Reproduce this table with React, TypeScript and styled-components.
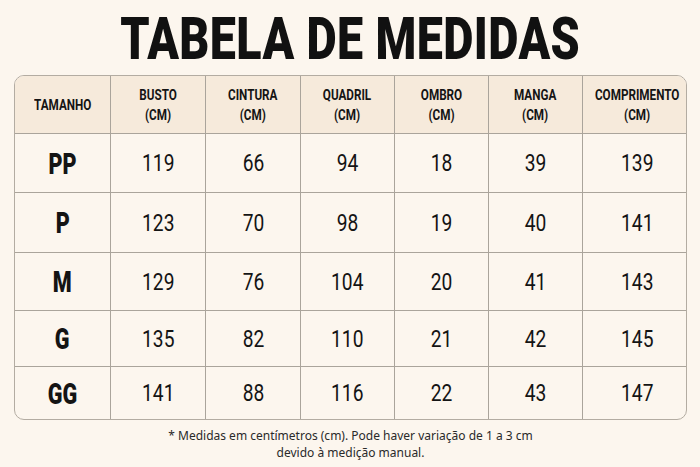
import React from "react";
import styled, { createGlobalStyle } from "styled-components";

const Global = createGlobalStyle`
  html, body { margin: 0; padding: 0; background: #fcf6ee; }
  body { font-family: "Roboto", "Liberation Sans", sans-serif; }
`;

const Page = styled.div`
  width: 700px;
  height: 467px;
  box-sizing: border-box;
  padding: 0 13px 0 14px;
  display: flex;
  flex-direction: column;
  align-items: stretch;
  background: #fcf6ee;
  overflow: hidden;
`;

const Title = styled.h1`
  margin: 0;
  height: 75px;
  display: flex;
  align-items: center;
  justify-content: center;
  font-family: "Roboto", sans-serif;
  font-weight: 900;
  font-size: 59px;
  line-height: 1;
  color: #111;
  letter-spacing: 0.5px;
`;

const Squeeze = styled.span<{ $x: number }>`
  display: inline-block;
  transform: scaleX(${(p) => p.$x});
  white-space: nowrap;
  margin-top: 2px;
`;

const Table = styled.div`
  display: grid;
  grid-template-columns: 96px 95px 95px 94px 94px 94px 1fr;
  grid-template-rows: 58px 59px 60px 58px 56px 52px;
  border: 1px solid #b3aca2;
  border-radius: 10px;
  overflow: hidden;
  background: #fcf6ee;
`;

const Cell = styled.div<{ $head?: boolean; $lastCol?: boolean; $lastRow?: boolean }>`
  display: flex;
  align-items: center;
  justify-content: center;
  text-align: center;
  background: ${(p) => (p.$head ? "#f6eadb" : "transparent")};
  border-right: ${(p) => (p.$lastCol ? "none" : "1px solid #aaa49b")};
  border-bottom: ${(p) => (p.$lastRow ? "none" : "1px solid #aaa49b")};
  color: #141414;
`;

const HeadText = styled.span`
  display: inline-block;
  font-weight: 700;
  font-size: 15px;
  line-height: 20px;
  transform: scaleX(0.78);
  white-space: nowrap;
`;

const SizeText = styled.span`
  display: inline-block;
  font-weight: 900;
  font-size: 30px;
  transform: scaleX(0.72);
`;

const NumText = styled.span`
  display: inline-block;
  font-weight: 400;
  font-size: 24px;
  transform: scaleX(0.8);
`;

const Note = styled.p`
  margin: 7px 0 0;
  text-align: center;
  font-family: "Noto Sans", "Open Sans", sans-serif;
  font-size: 12px;
  line-height: 17px;
  color: #2a2a2a;
`;

const heads = [
  ["TAMANHO"],
  ["BUSTO", "(CM)"],
  ["CINTURA", "(CM)"],
  ["QUADRIL", "(CM)"],
  ["OMBRO", "(CM)"],
  ["MANGA", "(CM)"],
  ["COMPRIMENTO", "(CM)"],
];

const rows: [string, number[]][] = [
  ["PP", [119, 66, 94, 18, 39, 139]],
  ["P", [123, 70, 98, 19, 40, 141]],
  ["M", [129, 76, 104, 20, 41, 143]],
  ["G", [135, 82, 110, 21, 42, 145]],
  ["GG", [141, 88, 116, 22, 43, 147]],
];

export default function App() {
  return (
    <>
      <Global />
      <Page>
        <Title>
          <Squeeze $x={0.79}>TABELA DE MEDIDAS</Squeeze>
        </Title>
        <Table>
          {heads.map((h, i) => (
            <Cell key={i} $head $lastCol={i === heads.length - 1}>
              <HeadText>
                {h.map((line, j) => (
                  <React.Fragment key={j}>
                    {j > 0 && <br />}
                    {line}
                  </React.Fragment>
                ))}
              </HeadText>
            </Cell>
          ))}
          {rows.map(([size, vals], r) => (
            <React.Fragment key={size}>
              <Cell $lastRow={r === rows.length - 1}>
                <SizeText>{size}</SizeText>
              </Cell>
              {vals.map((v, c) => (
                <Cell key={c} $lastCol={c === vals.length - 1} $lastRow={r === rows.length - 1}>
                  <NumText>{v}</NumText>
                </Cell>
              ))}
            </React.Fragment>
          ))}
        </Table>
        <Note>
          * Medidas em centímetros (cm). Pode haver variação de 1 a 3 cm
          <br />
          devido à medição manual.
        </Note>
      </Page>
    </>
  );
}
